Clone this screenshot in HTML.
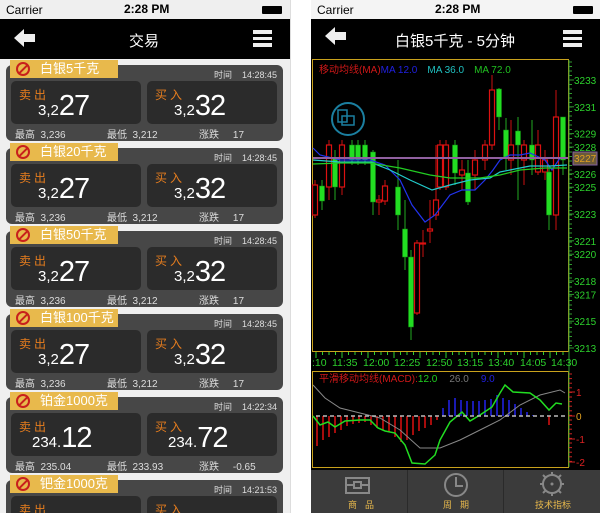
<!DOCTYPE html>
<html><head><meta charset="utf-8"><style>
*{margin:0;padding:0;box-sizing:border-box}
html{width:600px;height:513px;overflow:hidden}
body{width:600px;height:513px;overflow:hidden;background:#fff;position:relative;font-family:"Liberation Sans","Noto Sans CJK SC",sans-serif}
.a{position:absolute}
.sb{height:19px;font-size:12px;color:#000}
.card{position:absolute;left:6px;width:277px;height:76px;background:#474747;border-radius:6px}
.ban{position:absolute;left:4px;top:-5px;width:108px;height:18px;background:#e8b94c;color:#fff;font-size:13px;line-height:18px;padding-left:30px}
.ban i{position:absolute;left:6px;top:2px;width:14px;height:14px;border:2px solid #c8201c;border-radius:50%}
.ban i:after{content:"";position:absolute;left:4px;top:-1px;width:2px;height:13px;background:#c8201c;transform:rotate(45deg)}
.tm{position:absolute;right:6px;top:3px;color:#ddd;font-size:9px}
.tm span{margin-right:10px}
.box{position:absolute;top:16px;width:130px;height:43px;background:#2b2b2b;border-radius:5px;color:#fff}
.box b{position:absolute;left:8px;top:5px;color:#e67d1e;font-weight:normal;font-size:12px;letter-spacing:3px}
.box p{position:absolute;left:27px;top:9px;font-size:15px;white-space:nowrap}
.box p em{font-style:normal;font-size:29px;letter-spacing:-1px}
.bot{position:absolute;top:61px;font-size:10px;color:#ddd;white-space:nowrap}
.last{height:33px;overflow:hidden;border-radius:6px 6px 0 0}
.last .box{height:17px;overflow:hidden;border-radius:5px 5px 0 0}
</style></head><body>
<div class="a" style="left:0;top:0;width:290px;height:513px;background:#efefef"></div>
<div class="a" style="left:290px;top:0;width:1px;height:513px;background:#ddd"></div>
<div class="a sb" style="left:6px;top:3px">Carrier</div>
<div class="a sb" style="left:124px;top:2px;font-weight:bold">2:28 PM</div>
<div class="a" style="left:262px;top:6px;width:20px;height:8px;background:#000;border-radius:1px"></div>
<div class="a" style="left:0;top:19px;width:290px;height:40px;background:#000"></div>
<div class="a" style="left:129px;top:30px;color:#fff;font-size:15px">交易</div>
<svg class="a" style="left:14px;top:29px" width="22" height="18"><path d="M0 9 L10 0 V5 H21 V13 H10 V18Z" fill="#eee"/></svg>
<div class="a" style="left:253px;top:30px;width:19px;height:17px;border-top:4px solid #eee;border-bottom:4px solid #eee"><div style="margin-top:3px;height:3px;background:#eee"></div></div>
<div class="a" style="left:0;top:0;width:290px;height:513px;overflow:hidden"><div id="cards"></div></div>
<div class="a" style="left:311px;top:0;width:289px;height:19px;background:#f4f4f4"></div>
<div class="a sb" style="left:317px;top:3px">Carrier</div>
<div class="a sb" style="left:435px;top:2px;font-weight:bold">2:28 PM</div>
<div class="a" style="left:573px;top:6px;width:20px;height:8px;background:#000;border-radius:1px"></div>
<div class="a" style="left:311px;top:19px;width:289px;height:451px;background:#000"></div>
<svg class="a" style="left:325px;top:27px" width="22" height="18"><path d="M0 9 L10 0 V5 H21 V13 H10 V18Z" fill="#eee"/></svg>
<div class="a" style="left:395px;top:30px;color:#fff;font-size:15px">白银5千克 - 5分钟</div>
<div class="a" style="left:563px;top:30px;width:19px;height:17px;border-top:4px solid #eee;border-bottom:4px solid #eee"><div style="margin-top:3px;height:3px;background:#eee"></div></div>
<svg class="a" style="left:0;top:0" width="600" height="513" id="ch">
<rect x="312.5" y="59.5" width="256" height="292" fill="none" stroke="#c9a21c"/>
<rect x="312.5" y="371.5" width="256" height="96" fill="none" stroke="#c9a21c"/>
<line x1="569" y1="60" x2="569" y2="467" stroke="#2f9a2f"/>
<text x="319" y="73" font-size="10" fill="#d01818" font-family="Liberation Sans,Noto Sans CJK SC,sans-serif">移动均线(MA)<tspan fill="#2020e0">MA 12.0</tspan><tspan fill="#20c0c0" dx="10">MA 36.0</tspan><tspan fill="#20c020" dx="10">MA 72.0</tspan></text>
<circle cx="348" cy="119" r="16" fill="none" stroke="#1b7fa0" stroke-width="2"/>
<rect x="338" y="110" width="9" height="12" fill="none" stroke="#1b7fa0" stroke-width="1.5"/><rect x="342" y="116" width="12" height="9" fill="none" stroke="#1b7fa0" stroke-width="1.5"/>
<g id="cd"></g>
<line x1="313" y1="158" x2="568" y2="158" stroke="#9060a0" stroke-width="2"/>
<rect x="573" y="152" width="24" height="13" fill="#6a5a3a" stroke="#8060a0"/>
<text x="574" y="162" font-size="10" fill="#e0a020" font-family="Liberation Sans">3227</text>
<g font-size="10.5" fill="#2cd02c" font-family="Liberation Sans">
<text x="312" y="366">:10</text><text x="332" y="366">11:35</text><text x="363" y="366">12:00</text><text x="394" y="366">12:25</text><text x="426" y="366">12:50</text><text x="457" y="366">13:15</text><text x="488" y="366">13:40</text><text x="520" y="366">14:05</text><text x="551" y="366">14:30</text></g>
<text x="319" y="382" font-size="10" fill="#d01818" font-family="Liberation Sans,Noto Sans CJK SC,sans-serif">平滑移动均线(MACD):<tspan fill="#20d020">12.0</tspan><tspan fill="#777" dx="12">26.0</tspan><tspan fill="#2020e0" dx="12">9.0</tspan></text>
<line x1="316" y1="416" x2="568" y2="416" stroke="#bbb" stroke-dasharray="4,3" stroke-width="1.5"/>
</svg>
<div class="a" style="left:311px;top:470px;width:289px;height:43px;background:#3b3b3b"></div>
<div class="a" style="left:407px;top:470px;width:1px;height:43px;background:#2a2a2a"></div>
<div class="a" style="left:503px;top:470px;width:1px;height:43px;background:#2a2a2a"></div>
<svg class="a" style="left:345px;top:475px" width="26" height="20"><rect x="1" y="3" width="23" height="15" fill="none" stroke="#888" stroke-width="2"/><line x1="1" y1="10" x2="24" y2="10" stroke="#888" stroke-width="2"/><rect x="9" y="7" width="7" height="6" fill="#3b3b3b" stroke="#888" stroke-width="2"/></svg>
<div class="a" style="left:348px;top:498px;font-size:9px;color:#e8b94c;letter-spacing:8px">商品</div>
<svg class="a" style="left:443px;top:473px" width="26" height="24"><circle cx="13" cy="12" r="11" fill="none" stroke="#888" stroke-width="2"/><path d="M13 4 V13 H20" fill="none" stroke="#888" stroke-width="2"/></svg>
<div class="a" style="left:443px;top:498px;font-size:9px;color:#e8b94c;letter-spacing:8px">周期</div>
<svg class="a" style="left:538px;top:471px" width="28" height="26"><circle cx="14" cy="13" r="9" fill="none" stroke="#888" stroke-width="2"/><circle cx="14" cy="13" r="1.5" fill="#888"/><path d="M14 1V5M14 21V25M2 13H6M22 13H26M5 4L8 7M23 4L20 7M5 22L8 19M23 22L20 19" stroke="#888" stroke-width="2"/></svg>
<div class="a" style="left:535px;top:498px;font-size:9px;color:#e8b94c">技术指标</div>
<script>
var C=[["白银5千克","14:28:45","3,2","27","3,2","32","3,236","3,212","17"],["白银20千克","14:28:45","3,2","27","3,2","32","3,236","3,212","17"],["白银50千克","14:28:45","3,2","27","3,2","32","3,236","3,212","17"],["白银100千克","14:28:45","3,2","27","3,2","32","3,236","3,212","17"],["铂金1000克","14:22:34","234.","12","234.","72","235.04","233.93","-0.65"],["钯金1000克","14:21:53","","","","","","",""]];
var h="";C.forEach(function(c,i){var t=65+i*83;var L=i==5;h+='<div class="card'+(L?' last':'')+'" style="top:'+t+'px">'+(L?'':'')+'<div class="tm"><span>时间</span>'+c[1]+'</div><div class="box" style="left:5px"><b>卖出</b>'+(L?'':'<p'+(c[2].length>3?' style="left:21px"':'')+'>'+c[2]+'<em>'+c[3]+'</em></p>')+'</div><div class="box" style="left:141px"><b>买入</b>'+(L?'':'<p'+(c[4].length>3?' style="left:21px"':'')+'>'+c[4]+'<em>'+c[5]+'</em></p>')+'</div>'+(L?'':'<div class="bot" style="left:9px">最高&nbsp; '+c[6]+'</div><div class="bot" style="left:101px">最低&nbsp; '+c[7]+'</div><div class="bot" style="left:193px">涨跌&nbsp;&nbsp;&nbsp;&nbsp; '+c[8]+'</div>')+'</div><div class="ban" style="left:10px;top:'+(t-5)+'px">'+'<i></i>'+c[0]+'</div>';});
document.getElementById("cards").innerHTML=h;
var s="";
function Y(p){return 80+(3233-p)*13.4}
var lab=[3233,3231,3229,3228,3227,3226,3225,3223,3221,3220,3218,3217,3215,3213];
lab.forEach(function(p){var y=Y(p);if(p==3227)return;s+='<line x1="569" y1="'+y+'" x2="574" y2="'+y+'" stroke="#2f9a2f"/><text x="574" y="'+(y+4)+'" font-size="10" fill="#2cd02c" font-family="Liberation Sans">'+p+'</text>';});
for(var y=62;y<350;y+=4.5)s+='<line x1="569" y1="'+y+'" x2="572" y2="'+y+'" stroke="#2f9a2f"/>';
for(var x=316;x<568;x+=6.5)s+='<line x1="'+x+'" y1="352" x2="'+x+'" y2="'+(Math.round((x-316)/6.5)%4==0?358:355)+'" stroke="#2cd02c"/>';
var K=[[315,185,215,180,218,'r'],[322,186,201,180,210,'g'],[329,145,187,140,200,'r'],[335,158,187,150,200,'g'],[342,145,187,140,195,'r'],[352,145,160,140,165,'g'],[358,145,160,140,165,'g'],[365,145,160,140,165,'g'],[373,152,202,150,215,'g'],[379,200,202,195,215,'r'],[385,186,201,180,205,'r'],[398,187,215,160,230,'g'],[405,229,257,200,270,'g'],[411,257,327,250,340,'g'],[417,243,313,240,315,'r'],[423,243,244,230,257,'r'],[430,229,231,200,243,'r'],[436,200,215,145,220,'r'],[440,145,187,140,190,'r'],[446,145,187,140,190,'r'],[455,145,173,140,185,'g'],[462,170,175,160,190,'r'],[468,173,202,160,205,'g'],[475,160,175,150,190,'r'],[485,145,160,140,170,'r'],[492,90,145,75,150,'r'],[499,89,117,88,130,'g'],[506,130,157,118,170,'g'],[511,145,160,120,175,'r'],[518,131,145,117,200,'g'],[524,145,160,140,185,'r'],[532,145,160,120,175,'g'],[538,145,172,130,175,'r'],[545,160,172,150,180,'r'],[549,172,215,165,230,'g'],[556,117,215,90,230,'r'],[563,117,160,117,175,'g']];
K.forEach(function(k){var c=k[5]=='g'?'#22dd22':'#dd1111';s+='<line x1="'+k[0]+'" y1="'+k[3]+'" x2="'+k[0]+'" y2="'+k[4]+'" stroke="'+(k[5]=='g'?'#22aa22':'#cc1111')+'"/>';if(k[5]=='g')s+='<rect x="'+(k[0]-2.5)+'" y="'+k[1]+'" width="5" height="'+Math.max(1,k[2]-k[1])+'" fill="'+c+'" stroke="#118811" stroke-width=".5"/>';else s+='<rect x="'+(k[0]-2.5)+'" y="'+k[1]+'" width="5" height="'+Math.max(1,k[2]-k[1])+'" fill="#000" stroke="'+c+'" stroke-width="1.2"/>';});
s+='<polyline fill="none" stroke="#2233ee" stroke-width="1.2" points="313,148 320,155 340,160 370,160 385,165 400,180 412,205 425,222 435,215 450,195 462,190 475,190 485,180 493,170 500,160 510,155 520,155 530,153 545,160 552,170 560,158 567,158"/>';
s+='<polyline fill="none" stroke="#22cccc" stroke-width="1.2" points="313,160 340,162 370,162 390,170 410,180 432,190 450,185 470,180 490,178 500,172 510,170 530,166 550,166 567,165"/>';
s+='<polyline fill="none" stroke="#22cc22" stroke-width="1.2" points="313,164 340,163 370,163 400,168 430,175 450,178 480,178 500,175 520,170 545,168 567,168"/>';
[[392,'1'],[416,'0'],[439,'-1'],[462,'-2']].forEach(function(a){s+='<line x1="569" y1="'+a[0]+'" x2="575" y2="'+a[0]+'" stroke="#cc2222"/><text x="576" y="'+(a[0]+4)+'" font-size="10" fill="'+(a[1]=='0'?'#e0a020':'#dd2222')+'" font-family="Liberation Sans">'+a[1]+'</text>';});
for(var y=374;y<466;y+=4.6)s+='<line x1="569" y1="'+y+'" x2="572" y2="'+y+'" stroke="#cc2222"/>';
var bars=[[317,446],[323,440],[329,437],[335,433],[341,430],[347,426],[353,424],[359,423],[365,422],[371,425],[377,428],[383,430],[389,432],[395,437],[401,442],[407,440],[413,435],[419,431],[425,428],[431,425],[437,420]];
bars.forEach(function(b){s+='<line x1="'+b[0]+'" y1="416" x2="'+b[0]+'" y2="'+b[1]+'" stroke="#dd1111" stroke-width="1.5"/>';});
var bb=[[443,408],[449,400],[455,398],[461,400],[467,401],[473,401],[479,401],[485,400],[491,399],[497,395],[503,398],[509,400],[515,404],[521,408],[527,412],[533,415]];
bb.forEach(function(b){s+='<line x1="'+b[0]+'" y1="416" x2="'+b[0]+'" y2="'+b[1]+'" stroke="#2222ee" stroke-width="1.5"/>';});
s+='<line x1="549" y1="416" x2="549" y2="425" stroke="#dd1111" stroke-width="1.5"/>';
s+='<polyline fill="none" stroke="#888" points="313,385 325,398 340,408 360,413 380,418 400,430 420,448 440,448 460,440 480,430 500,420 520,405 540,395 560,390 565,393"/>';
s+='<polyline fill="none" stroke="#22dd22" stroke-width="1.5" points="313,416 320,425 328,422 335,427 345,421 360,420 370,420 378,428 385,431 395,433 405,445 412,463 425,464 435,455 440,440 450,422 462,412 470,421 480,415 492,407 500,393 505,385 513,392 530,393 540,400 549,410 556,403 562,404"/>';
document.getElementById("cd").innerHTML=s;
</script>
</body></html>
